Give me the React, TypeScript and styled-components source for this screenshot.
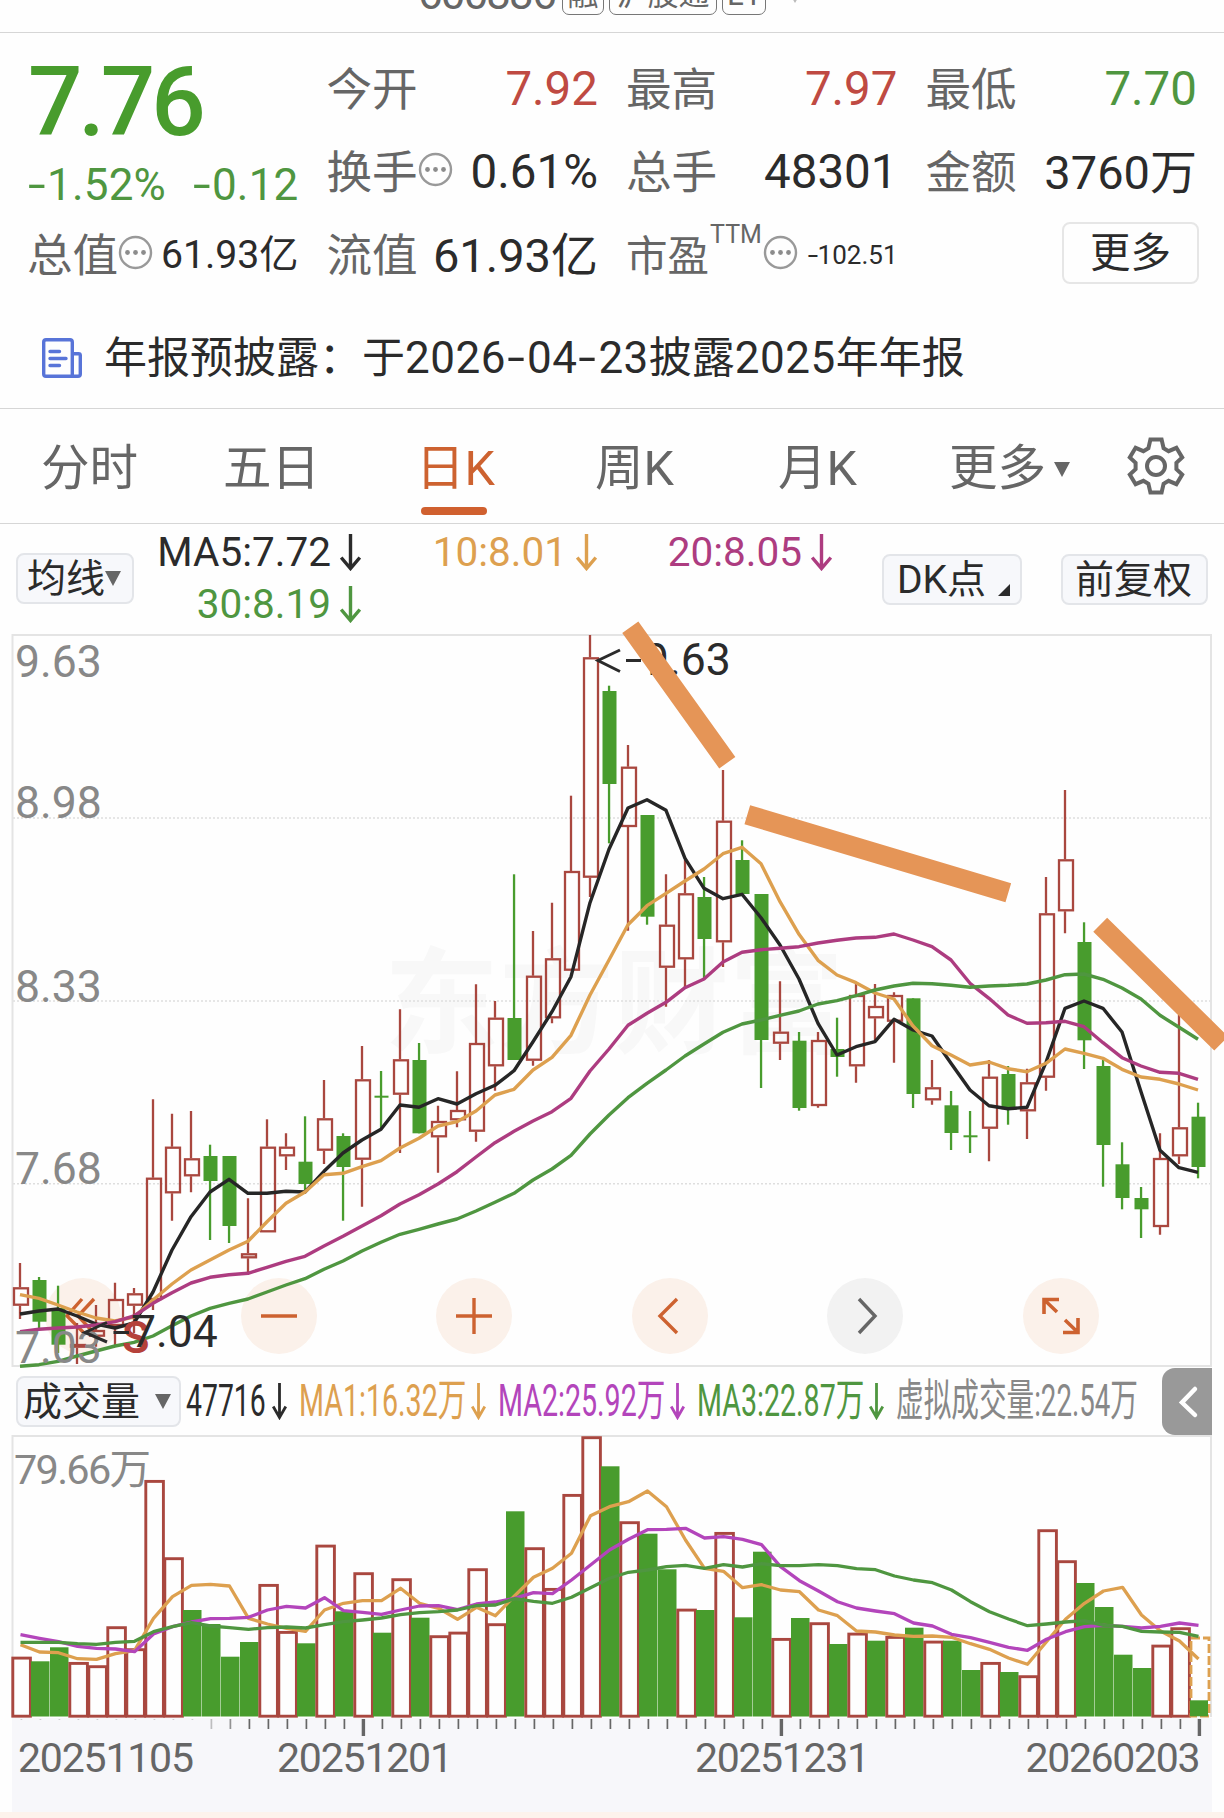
import React from "react";
import styled, { createGlobalStyle } from "styled-components";

const GREEN = "#489c2d";
const LINE_GREEN = "#4f9640";
const RED = "#a9473f";
const ORANGE = "#dda04f";
const MAGENTA = "#ad3c80";
const PURPLE = "#b345bb";
const INK = "#2b2b2b";
const GREY = "#666666";
const ACCENT = "#cd6230";
const FONT = `Roboto, "Noto Sans CJK SC", sans-serif`;

const GlobalStyle = createGlobalStyle`
  * { box-sizing: border-box; }
  body { margin: 0; background: #fefefe; font-family: ${FONT}; color: ${INK}; }
`;

const Page = styled.main`
  width: 1224px;
  height: 1818px;
  overflow: hidden;
  display: flex;
  flex-direction: column;
  background: #fefefe;
`;

const TitleBar = styled.header`
  height: 33px;
  flex: none;
  display: flex;
  align-items: flex-end;
  padding: 0 0 17px 418px;
  border-bottom: 1px solid #d6d6d6;
`;

const Code = styled.span`
  font-size: 44px;
  line-height: 44px;
  height: 44px;
  margin-bottom: -1px;
  letter-spacing: -1.9px;
  color: ${GREY};
  width: 144px;
`;

const Badge = styled.span<{ $w: number }>`
  width: ${(p) => p.$w}px;
  height: 36px;
  margin: 0 6px 0 0;
  flex: none;
  border: 1.5px solid #777;
  border-radius: 7px;
  font-size: 31px;
  line-height: 29px;
  text-align: center;
  color: ${GREY};
  white-space: nowrap;
  & + & { margin-left: -1px; }
`;

const TitleCaret = styled.span`
  margin: 0 0 12px 17px;
`;

const Caret = styled.i<{ $size?: number; $color?: string }>`
  display: block;
  flex: none;
  border: ${(p) => (p.$size ?? 17) / 2}px solid transparent;
  border-top: ${(p) => ((p.$size ?? 17) * 15) / 17}px solid ${(p) => p.$color ?? GREY};
  border-bottom: 0;
`;

const Quote = styled.section`
  flex: none;
  height: 273px;
  padding: 15px 27px 0;
  display: grid;
  grid-template-columns: repeat(4, 1fr);
  grid-template-rows: repeat(3, 83px);
  column-gap: 28px;
`;

const PriceBlock = styled.div`
  grid-row: span 2;
  color: ${LINE_GREEN};
`;

const Price = styled.div`
  padding-left: 1px;
  font-size: 96px;
  font-weight: 500;
  line-height: 109px;
  letter-spacing: -4.2px;
  color: ${GREEN};
`;

const Change = styled.div`
  display: flex;
  justify-content: space-between;
  margin-top: -1px;
  font-size: 44px;
  line-height: 58px;
  letter-spacing: 0.2px;
`;

const Cell = styled.div`
  display: flex;
  align-items: center;
  white-space: nowrap;
  line-height: 83px;
`;

const Label = styled.span<{ $size?: number }>`
  font-size: ${(p) => p.$size ?? 45.6}px;
  padding-top: 1px;
  color: ${GREY};
`;

const Value = styled.span<{ $size?: number; $color?: string }>`
  margin-left: auto;
  font-size: ${(p) => p.$size ?? 47.5}px;
  color: ${(p) => p.$color ?? INK};
`;

const Sup = styled.sup`
  font-size: 25px;
  line-height: 25px;
  color: ${GREY};
  align-self: flex-start;
  margin: 8px 1px 0 1px;
`;

const MoreButton = styled.button`
  width: 137px;
  height: 62px;
  margin: -5px -2px 0 auto;
  padding: 0;
  border: 2px solid #e6e6e6;
  border-radius: 8px;
  background: #fefefe;
  font: 40.5px/54px ${FONT};
  color: ${INK};
`;

const InfoIcon = styled.svg`
  flex: none;
  margin-top: -6px;
`;

const DashGlyph = styled.span<{ $w: number }>`
  display: inline-block;
  width: ${(p) => p.$w}px;
  text-align: center;
  transform: scaleX(1.45);
`;

const Notice = styled.section`
  flex: none;
  height: 103px;
  padding: 2px 0 0 42px;
  display: flex;
  align-items: center;
  gap: 22px;
  border-bottom: 1px solid #d6d6d6;
  font-size: 43px;
  line-height: 60px;
  white-space: nowrap;
`;

const Digits = styled.span`
  font-size: 44px;
  letter-spacing: 0.5px;
`;

const Tabs = styled.nav`
  flex: none;
  height: 115px;
  display: flex;
  border-bottom: 1px solid #d6d6d6;
  padding-left: 41px;
`;

const Tab = styled.div<{ $w: number }>`
  width: ${(p) => p.$w}px;
  display: flex;
  flex-direction: column;
  font-size: 48.5px;
  line-height: 98px;
  padding-top: 11px;
  color: ${GREY};
  white-space: nowrap;
`;

const ActiveTab = styled(Tab)`
  margin-left: -2px;
  margin-right: 2px;
  color: ${ACCENT};
`;

const Underline = styled.i`
  width: 66px;
  height: 8px;
  margin: -11px 0 0 5px;
  border-radius: 4px;
  background: #d0602f;
`;

const TabRow = styled.div`
  display: flex;
  align-items: center;
  gap: 8px;
`;

const GearSlot = styled.div`
  display: flex;
  align-items: center;
`;

const Legend = styled.section`
  flex: none;
  height: 110px;
  padding: 0 16px;
  display: flex;
  align-items: flex-start;
`;

const Chip = styled.button<{ $w: number; $mt: number; $ml?: number; $pl: number }>`
  width: ${(p) => p.$w}px;
  height: 51px;
  margin: ${(p) => p.$mt}px 0 0 ${(p) => p.$ml ?? 0}px;
  padding: 0 0 0 ${(p) => p.$pl}px;
  flex: none;
  display: flex;
  align-items: center;
  border: 2px solid #e3e5e9;
  border-radius: 8px;
  background: #f7f8fb;
  font: 39px/44px ${FONT};
  color: ${INK};
  white-space: nowrap;
`;

const Corner = styled.i`
  margin: 21px 0 0 12px;
  border-left: 12px solid transparent;
  border-bottom: 12px solid ${INK};
`;

const Averages = styled.div`
  width: 710px;
  margin-left: -9px;
  padding-top: 2px;
  display: grid;
  grid-template-columns: 236px 236px 235px;
  grid-auto-rows: 52px;
`;

const Average = styled.div<{ $color: string }>`
  display: flex;
  justify-content: flex-end;
  align-items: center;
  gap: 9px;
  font-size: 40.5px;
  line-height: 54px;
  color: ${(p) => p.$color};
  white-space: nowrap;
`;

const ChartArea = styled.section`
  position: relative;
  flex: none;
  height: 734px;
`;

const Chart = styled.svg`
  display: block;
  position: relative;
  width: 1224px;
  overflow: visible;
  font-family: ${FONT};
`;

const Backdrop = styled.div`
  position: absolute;
  left: 384px;
  top: 306px;
  font-size: 115px;
  font-weight: 700;
  line-height: 130px;
  color: #f8f8f8;
`;

const Controls = styled.div`
  position: absolute;
  left: 45px;
  top: 644px;
  display: flex;
  gap: 119.5px;
`;

const RoundButton = styled.button<{ $grey?: boolean }>`
  width: 76px;
  height: 76px;
  padding: 0;
  border: 0;
  border-radius: 50%;
  background: ${(p) => (p.$grey ? "#f2f2f2" : "#fbf1ea")};
  color: ${(p) => (p.$grey ? GREY : ACCENT)};
`;

const VolumeBar = styled.section`
  flex: none;
  height: 67px;
  padding: 0 12px 0 16px;
  display: flex;
  align-items: flex-start;
`;

const VolumeChip = styled(Chip)`
  justify-content: space-between;
  padding-right: 8px;
`;

const VolumeItems = styled.div`
  display: flex;
  gap: 12px;
  margin-left: 5px;
`;

const VolumeItem = styled.div<{ $color: string }>`
  display: flex;
  align-items: center;
  gap: 5px;
  height: 66px;
  color: ${(p) => p.$color};
`;

const Narrow = styled.span<{ $w: number; $k: number }>`
  display: block;
  width: ${(p) => p.$w}px;
  font-size: 44px;
  line-height: 66px;
  white-space: nowrap;
  & > span {
    display: inline-block;
    transform-origin: 0 50%;
    transform: scaleX(${(p) => p.$k});
  }
`;

const Drawer = styled.button`
  width: 50px;
  height: 67px;
  margin-left: auto;
  padding: 0;
  border: 0;
  border-radius: 13px 0 0 13px;
  background: #999;
`;

const BottomStrip = styled.footer`
  flex: 1;
  background: #fdf3ec;
`;

/* ---------- data ---------- */

type Candle = [up: 0 | 1, high: number, top: number, bottom: number, low: number];

const candles: Candle[] = [
  [1, 1263, 1287.3, 1305.7, 1319], [0, 1277, 1280, 1321.7, 1328], [0, 1285.7, 1308, 1344.7, 1353],
  [1, 1323, 1344, 1347.7, 1364], [1, 1305, 1330, 1336.7, 1346.7], [1, 1282.7, 1299, 1326, 1345],
  [1, 1288, 1293.3, 1305.7, 1333], [1, 1099.3, 1177.7, 1300, 1310], [1, 1113.7, 1146.7, 1193.3, 1220.7],
  [1, 1111, 1158.3, 1176.3, 1192.3], [0, 1144.7, 1156, 1181, 1240], [0, 1156, 1156, 1226, 1243],
  [1, 1198.3, 1253.3, 1258.3, 1273.3], [1, 1119.3, 1146.7, 1232.3, 1232.3], [1, 1133.3, 1146.7, 1156.3, 1170],
  [0, 1116.3, 1161.7, 1184, 1190.7], [1, 1080, 1118.3, 1150.7, 1164], [0, 1133.3, 1136, 1167, 1220.7],
  [1, 1046, 1079.3, 1159.7, 1206.7], [0, 1071, 1095.7, 1097.7, 1128.3], [1, 1009.3, 1059.3, 1094.7, 1153],
  [0, 1043, 1060, 1133.3, 1133.3], [1, 1105.7, 1121, 1137.3, 1172.7], [1, 1071.3, 1110, 1120.3, 1127.3],
  [1, 984.3, 1043, 1131.7, 1141.7], [1, 1001, 1017.7, 1066.3, 1090.7], [0, 874.3, 1018, 1060, 1060],
  [1, 931, 975.7, 1060.7, 1065.7], [1, 902.7, 958.3, 1018.3, 1023.3], [1, 795.7, 871, 970.7, 970.7],
  [1, 635, 657.3, 877.7, 897], [0, 685.7, 691, 784, 843.3], [1, 745, 766.7, 827, 930.7],
  [0, 815, 815, 916.7, 924.7], [1, 874.3, 924.7, 967.7, 1006.7], [1, 860, 893.3, 959.3, 988.3],
  [0, 877, 897, 939, 978.3], [1, 770, 820.7, 942.3, 967], [0, 840.3, 860, 894, 894],
  [0, 894, 894, 1040, 1088], [1, 981.3, 1031.7, 1043.7, 1060], [0, 1032, 1040.7, 1108, 1110.7],
  [1, 1032, 1040, 1106, 1107.7], [0, 1017.7, 1049, 1057, 1076.7], [1, 984, 995, 1066.3, 1082.7],
  [1, 984, 1006, 1018.3, 1040], [1, 992.3, 995, 1021.7, 1062.7], [0, 998.3, 998.3, 1094, 1108],
  [1, 1060, 1087.3, 1100.3, 1104.7], [0, 1091, 1105.3, 1133, 1150], [0, 1111, 1135.3, 1137.3, 1153],
  [1, 1060, 1076.7, 1128.7, 1161.3], [0, 1066, 1074, 1109.3, 1124.7], [1, 1068.7, 1082.3, 1111.3, 1139],
  [1, 877, 913.3, 1077.7, 1090.7], [1, 790, 859.3, 911.3, 933.3], [0, 922.3, 942, 1040.3, 1069],
  [0, 1060, 1066, 1145, 1186.7], [0, 1142.3, 1164.3, 1198, 1209.3], [0, 1187, 1198, 1209.3, 1238],
  [1, 1133.3, 1158, 1227, 1234.7], [1, 1015, 1127.3, 1156.3, 1164], [0, 1102.7, 1116.7, 1167, 1178.3],
];

const ma5 = [1314, 1311, 1309, 1316, 1324, 1328, 1323, 1292, 1250, 1216.7, 1192, 1179.3, 1193.3, 1193.3, 1191.3, 1192, 1171.3, 1153, 1140, 1129.3, 1105, 1107.3, 1098.7, 1104, 1093.7, 1085.3, 1070.7, 1041.7, 1011.7, 976.7, 902.7, 849.3, 808, 799.7, 810.3, 858.3, 888.3, 898.7, 894.3, 917.7, 945, 979, 1023.3, 1055, 1046.7, 1041.7, 1019.3, 1030, 1036, 1063.3, 1090, 1105.7, 1108.7, 1107.3, 1062.3, 1008.3, 1001, 1008.3, 1032, 1091.7, 1150.3, 1167.7, 1172.3];
const ma10 = [1294.7, 1298.3, 1305, 1312, 1318, 1321, 1317, 1300, 1284, 1270, 1260, 1250, 1241.3, 1221.7, 1203.3, 1192, 1174.7, 1173.3, 1166.7, 1160.7, 1148, 1138.3, 1126, 1121.7, 1111, 1095, 1089.3, 1070, 1057.3, 1035.3, 995, 960, 924.7, 905.7, 893.3, 881, 869, 853.7, 847.3, 863.7, 901.7, 934.3, 960.3, 975, 982.7, 993, 999, 1026, 1045.7, 1055, 1065, 1062, 1068.7, 1071.7, 1063.3, 1049, 1053.3, 1058.3, 1069.3, 1077, 1079.3, 1084, 1090];
const ma20 = [1331.7, 1329.3, 1328, 1327, 1325, 1321.7, 1316, 1303.3, 1292.7, 1283, 1277.3, 1274.7, 1273.3, 1267.3, 1261.3, 1256.3, 1246, 1236.3, 1226, 1215.7, 1204, 1194.7, 1184, 1171.7, 1157, 1142.7, 1131.3, 1121, 1111.7, 1098.3, 1071, 1049, 1025.3, 1013.3, 1002.3, 987.7, 979, 962, 952.3, 949.7, 948.3, 946.7, 943, 940.3, 938, 937.3, 934, 940, 946.7, 960, 983.3, 998.3, 1015, 1023.3, 1022.7, 1021.3, 1026.7, 1042.7, 1057.7, 1066, 1072.3, 1073.3, 1079.3];
const ma30 = [1366.3, 1364.7, 1361.3, 1356, 1351, 1346, 1342.3, 1336, 1325.7, 1316, 1308.3, 1303.3, 1299, 1292, 1285, 1278.7, 1269.3, 1261, 1251, 1242.3, 1234.3, 1229.3, 1224, 1219, 1211, 1202.3, 1193.3, 1180, 1169, 1155.3, 1134, 1115, 1097.7, 1083.3, 1070, 1056, 1044, 1032.3, 1024, 1020, 1015.3, 1011, 1004, 1000.7, 995.7, 990, 986, 983.3, 983.7, 985.3, 987.3, 986, 985.3, 984, 980, 974.7, 974, 979.3, 988, 999, 1015.3, 1027.3, 1039.3];

const volumes: [0 | 1, number][] = [
  [1, 1656.7], [0, 1661.3], [0, 1647.3], [1, 1662], [1, 1665.3], [1, 1626.3], [1, 1648.3], [1, 1480],
  [1, 1557.3], [0, 1610], [0, 1624], [0, 1656.7], [0, 1642], [1, 1584], [1, 1631], [0, 1643.3],
  [1, 1544.7], [0, 1611.3], [1, 1572.3], [0, 1632.7], [1, 1578.3], [0, 1617.7], [1, 1635.3], [1, 1631.7],
  [1, 1568.3], [1, 1623.3], [0, 1511.3], [1, 1547.3], [1, 1588], [1, 1494], [1, 1436.3], [0, 1466.3],
  [1, 1521.3], [0, 1533.7], [0, 1569.3], [1, 1608.7], [0, 1610], [1, 1532], [0, 1617.3], [0, 1551.7],
  [1, 1638], [0, 1618], [1, 1622.3], [0, 1644], [1, 1632.7], [0, 1640.7], [1, 1636], [0, 1627.7],
  [1, 1640.7], [0, 1640.7], [0, 1670], [1, 1662], [0, 1672], [1, 1675.3], [1, 1529.3], [1, 1560.3],
  [0, 1583], [0, 1607], [0, 1654.7], [0, 1668], [1, 1644.7], [1, 1627.3],
];

const vol1 = [884, 906, 908, 926, 928, 911, 902, 805, 740, 706, 703, 708, 805, 822, 835, 844, 780, 760, 752, 752, 715, 760, 775, 808, 772, 797, 738, 682, 655, 610, 497, 470, 455, 423, 470, 570, 655, 664, 713, 704, 720, 725, 780, 797, 843, 846, 855, 859, 858, 862, 881, 898, 924, 943, 875, 808, 760, 723, 712, 795, 843, 873, 927];
const vol2 = [854, 865, 875, 889, 895, 897, 905, 852, 830, 816, 806, 805, 802, 780, 769, 774, 743, 782, 787, 793, 780, 768, 767, 779, 762, 756, 745, 728, 731, 690, 645, 600, 568, 539, 538, 535, 564, 560, 568, 584, 650, 692, 723, 755, 774, 783, 791, 819, 828, 853, 863, 877, 892, 901, 868, 845, 830, 826, 829, 834, 829, 819, 826];
const vol3 = [877, 877, 877, 881, 883, 877, 874, 845, 830, 818, 828, 833, 838, 833, 831, 834, 824, 815, 810, 804, 794, 788, 785, 780, 767, 765, 746, 754, 760, 742, 713, 685, 667, 660, 650, 646, 655, 644, 651, 641, 647, 647, 644, 647, 656, 659, 678, 690, 698, 720, 755, 785, 807, 827, 822, 816, 812, 826, 829, 844, 846, 847, 859];

const STEP = 19;
const points = (ys: number[]) => ys.map((y, i) => `${20 + STEP * i},${y}`).join(" ");
const volPoints = (vs: number[]) => vs.map((v, i) => `${20.5 + STEP * i},${(1350 + v / 3).toFixed(1)}`).join(" ");

/* ---------- small drawings ---------- */

const Info = () => (
  <InfoIcon width="35" height="35" viewBox="0 0 35 35">
    <circle cx="17.5" cy="17.5" r="15.5" fill="none" stroke="#999" strokeWidth="2.4" />
    {[9.5, 17.5, 25.5].map((x) => (
      <circle key={x} cx={x} cy="17.5" r="2.4" fill="#8c8c8c" />
    ))}
  </InfoIcon>
);

const Down = ({ w = 21, sw = 3.4 }: { w?: number; sw?: number }) => (
  <svg width={w} height="38" viewBox={`0 0 ${w} 38`} fill="none" stroke="currentColor" strokeWidth={sw}>
    <path d={`M${w / 2} 1V35M1.2 24.5L${w / 2} 35.5L${w - 1.2} 24.5`} />
  </svg>
);

const Gear = () => (
  <svg width="58" height="58" viewBox="-29 -29 58 58" fill="none" stroke={GREY} strokeWidth="4">
    <path d="M-5.6-26.4H5.6L7.6-17.8L12.6-14.8L20.4-18.2L26.2-8.6L20.4-3.2V3.2L26.2 8.6L20.4 18.2L12.6 14.8L7.6 17.8L5.6 26.4H-5.6L-7.6 17.8L-12.6 14.8L-20.4 18.2L-26.2 8.6L-20.4 3.2V-3.2L-26.2-8.6L-20.4-18.2L-12.6-14.8L-7.6-17.8Z" />
    <circle r="9" />
  </svg>
);

const NoticeIcon = () => (
  <svg width="40" height="40" viewBox="0 0 40 40" fill="none" stroke="#5874d8" strokeWidth="3.4">
    <path d="M30.3 38V4Q30.3 1.7 28 1.7H4Q1.7 1.7 1.7 4V36Q1.7 38.3 4 38.3H36Q38.3 38.3 38.3 36V17.5Q38.3 15.8 36.5 15.8H30.3" />
    <path d="M8 13.5H17.5M8 20.5H24M8 27.5H17.5" strokeLinecap="round" />
  </svg>
);

const Glyph = ({ d, w = 3.4 }: { d: string; w?: number }) => (
  <svg width="76" height="76" viewBox="-38 -38 76 76" fill="none" stroke="currentColor" strokeWidth={w}>
    <path d={d} />
  </svg>
);

const Dash = ({ w = 18 }: { w?: number }) => <DashGlyph $w={w}>-</DashGlyph>;

function PriceChart() {
  return (
    <Chart height="734" viewBox="0 634 1224 734">
      <g fill="none" stroke="#dedede" strokeWidth="1.5" strokeDasharray="2 2">
        <path d="M13 818H1210M13 1001H1210M13 1183.7H1210" />
      </g>
      <rect x="12.5" y="635" width="1198.5" height="731" fill="none" stroke="#e4e4e4" strokeWidth="2" />
      {candles.map(([up, high, top, bottom, low], i) => {
        const x = 20 + STEP * i;
        return up ? (
          <g key={i} fill="none" stroke={RED} strokeWidth="2.3">
            <path d={`M${x} ${high}V${top}M${x} ${bottom}V${low}`} />
            <rect x={x - 6} y={top + 1} width="14" height={bottom - top - 2} />
          </g>
        ) : (
          <g key={i} fill={GREEN}>
            <rect x={x - 1.1} y={high} width="2.3" height={low - high} />
            <rect x={x - 6.5} y={top} width="14" height={bottom - top} />
          </g>
        );
      })}
      <g fill="none" strokeWidth="3.4" strokeLinejoin="round">
        <polyline points={points(ma5)} stroke="#262626" />
        <polyline points={points(ma10)} stroke={ORANGE} />
        <polyline points={points(ma20)} stroke={MAGENTA} />
        <polyline points={points(ma30)} stroke={LINE_GREEN} />
      </g>
      <g fill="#888" fontSize="44.5">
        <text x="15" y="676.5">9.63</text>
        <text x="15" y="818">8.98</text>
        <text x="15" y="1001.5">8.33</text>
        <text x="15" y="1184">7.68</text>
        <text x="15" y="1363">7.03</text>
      </g>
      <text x="122" y="1353" fontSize="45" fontWeight="600" fill="#b5413a">S</text>
      <g fill="none" stroke={INK} strokeWidth="3">
        <path d="M620 650L598 660.5L620 671.5M626 660.5H641M107 1322.5L85 1332.5L107 1342M113.5 1332.5H129" />
      </g>
      <g fill={INK} fontSize="44.5">
        <text x="644" y="675">9.63</text>
        <text x="131" y="1346.7">7.04</text>
      </g>
      <g stroke="#e59557" strokeWidth="19.8">
        <path d="M630.3 627.3L727.3 762.7M747.3 814.7L1008.3 892.8M1100.2 924.8L1221.2 1043.5" />
      </g>
    </Chart>
  );
}

function VolumeChart() {
  return (
    <Chart height="377" viewBox="0 1435 1224 377">
      <rect x="12" y="1718" width="1200" height="94" fill="#f7f7fa" />
      <path d="M12.5 1717V1436H1211V1717" fill="none" stroke="#e4e4e4" strokeWidth="2" />
      <text x="14" y="1483.5" fontSize="41.5" fill="#888" textLength="137">79.66万</text>
      {volumes.map(([up, top], i) => {
        const x = 12 + STEP * i;
        return up ? (
          <rect key={i} x={x + 0.8} y={top + 1.4} width="17.6" height={1714.8 - top} fill="none" stroke={RED} strokeWidth="2.9" />
        ) : (
          <rect key={i} x={x} y={top} width="18.5" height={1716.5 - top} fill={GREEN} />
        );
      })}
      <rect x="1191" y="1638" width="18" height="78" fill="none" stroke={ORANGE} strokeWidth="2.8" strokeDasharray="9 3" />
      <rect x="1190" y="1700.3" width="18" height="16" fill={GREEN} />
      <g fill="none" strokeWidth="3.3" strokeLinejoin="round">
        <polyline points={volPoints(vol1)} stroke={ORANGE} />
        <polyline points={volPoints(vol2)} stroke={PURPLE} />
        <polyline points={volPoints(vol3)} stroke={LINE_GREEN} />
      </g>
      {candles.map((_, i) => {
        const major = i === 18 || i === 40 || i === 62;
        const w = major ? 3.4 : 1.7;
        return (
          <rect
            key={i}
            x={21.4 + STEP * i - w / 2}
            y="1719"
            width={w}
            height={i < 10 ? 1 : major ? 17 : 10}
            fill={GREY}
            opacity={i < 10 ? 0.3 : i === 10 ? 0.4 : i === 11 ? 0.7 : 1}
          />
        );
      })}
      <g fill={GREY} fontSize="41">
        <text x="18" y="1772.4" textLength="176">20251105</text>
        <text x="277" y="1772.4" textLength="176">20251201</text>
        <text x="695" y="1772.4" textLength="175">20251231</text>
        <text x="1025.5" y="1772.4" textLength="175">20260203</text>
      </g>
    </Chart>
  );
}

export default function App() {
  return (
    <Page>
      <GlobalStyle />
      <TitleBar>
        <Code>600336</Code>
        <Badge $w={42}>融</Badge>
        <Badge $w={108}>沪股通</Badge>
        <Badge $w={44}>L1</Badge>
        <TitleCaret><Caret $size={12} $color="#bbb" /></TitleCaret>
      </TitleBar>

      <Quote>
        <PriceBlock>
          <Price>7.76</Price>
          <Change>
            <span><Dash w={20} />1.52%</span>
            <span><Dash w={20} />0.12</span>
          </Change>
        </PriceBlock>
        <Cell><Label>今开</Label><Value $color="#bf4a42">7.92</Value></Cell>
        <Cell><Label>最高</Label><Value $color="#bf4a42">7.97</Value></Cell>
        <Cell><Label>最低</Label><Value $color={LINE_GREEN}>7.70</Value></Cell>
        <Cell><Label>换手</Label><Info /><Value>0.61%</Value></Cell>
        <Cell><Label>总手</Label><Value>48301</Value></Cell>
        <Cell><Label>金额</Label><Value $size={47}>3760万</Value></Cell>
        <Cell><Label>总值</Label><Info /><Value $size={39.2}>61.93亿</Value></Cell>
        <Cell><Label>流值</Label><Value $size={47}>61.93亿</Value></Cell>
        <Cell>
          <Label $size={41.5}>市盈</Label><Sup>TTM</Sup><Info />
          <Value $size={26}><Dash w={10} />102.51</Value>
        </Cell>
        <Cell><MoreButton>更多</MoreButton></Cell>
      </Quote>

      <Notice>
        <NoticeIcon />
        <span>
          年报预披露：于<Digits>2026<Dash w={21} />04<Dash w={21} />23</Digits>披露<Digits>2025</Digits>年年报
        </span>
      </Notice>

      <Tabs>
        <Tab $w={182}>分时</Tab>
        <Tab $w={195}>五日</Tab>
        <ActiveTab $w={177}>日K<Underline /></ActiveTab>
        <Tab $w={183}>周K</Tab>
        <Tab $w={171}>月K</Tab>
        <Tab $w={178}><TabRow>更多<Caret /></TabRow></Tab>
        <GearSlot><Gear /></GearSlot>
      </Tabs>

      <Legend>
        <Chip $w={118} $mt={29} $pl={9}>均线<Caret /></Chip>
        <Averages>
          <Average $color={INK}>MA5:7.72<Down /></Average>
          <Average $color={ORANGE}>10:8.01<Down /></Average>
          <Average $color={MAGENTA}>20:8.05<Down /></Average>
          <Average $color={LINE_GREEN}>30:8.19<Down /></Average>
        </Averages>
        <Chip $w={140} $mt={30} $ml={48} $pl={13}>DK点<Corner /></Chip>
        <Chip $w={147} $mt={30} $ml={39} $pl={12}>前复权</Chip>
      </Legend>

      <ChartArea>
        <Backdrop>东方财富</Backdrop>
        <Controls>
          <RoundButton><Glyph d="M-1-17L-16 0L1 17M11-17L-5 0L11 17" /></RoundButton>
          <RoundButton><Glyph d="M-18 0H18" /></RoundButton>
          <RoundButton><Glyph d="M-18 0H18M0-18V18" /></RoundButton>
          <RoundButton><Glyph d="M7-17L-10 0L7 17" /></RoundButton>
          <RoundButton $grey><Glyph d="M-6-17L10 0L-6 17" /></RoundButton>
          <RoundButton><Glyph d="M-17-2V-16.5H-2M-16-15.5L-4-4M17 2V16.5H2M16 15.5L4 4" w={3.6} /></RoundButton>
        </Controls>
        <PriceChart />
      </ChartArea>

      <VolumeBar>
        <VolumeChip $w={165} $mt={8} $pl={5}>成交量<Caret /></VolumeChip>
        <VolumeItems>
          <VolumeItem $color={INK}><Narrow $w={81} $k={0.645}><span>47716</span></Narrow><Down w={15} sw={2.8} /></VolumeItem>
          <VolumeItem $color={ORANGE}><Narrow $w={167} $k={0.65}><span>MA1:16.32万</span></Narrow><Down w={15} sw={2.8} /></VolumeItem>
          <VolumeItem $color={PURPLE}><Narrow $w={167} $k={0.65}><span>MA2:25.92万</span></Narrow><Down w={15} sw={2.8} /></VolumeItem>
          <VolumeItem $color={LINE_GREEN}><Narrow $w={167} $k={0.65}><span>MA3:22.87万</span></Narrow><Down w={15} sw={2.8} /></VolumeItem>
          <VolumeItem $color="#888"><Narrow $w={243} $k={0.628}><span>虚拟成交量:22.54万</span></Narrow></VolumeItem>
        </VolumeItems>
        <Drawer>
          <svg width="50" height="67" viewBox="0 0 50 67" fill="none" stroke="#fff" strokeWidth="4.5" strokeLinecap="round">
            <path d="M33 21L20 34.5L33 47" />
          </svg>
        </Drawer>
      </VolumeBar>

      <VolumeChart />
      <BottomStrip />
    </Page>
  );
}
